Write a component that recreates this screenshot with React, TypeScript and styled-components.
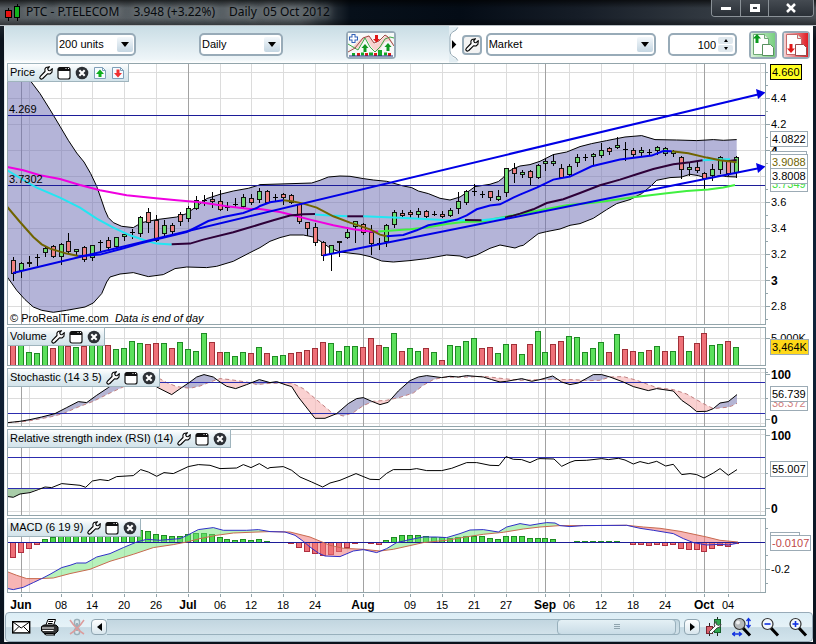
import React from "react";
import styled, { createGlobalStyle, css } from "styled-components";

const GlobalStyle = createGlobalStyle`
  *, *::before, *::after { box-sizing: border-box; }
  body { margin: 0; background: #0a121c; }
  button, select, input { font: inherit; color: inherit; margin: 0; }
`;

/* ---------- chart data ---------- */

type Pt = [number, number];

/* Samples are stored as x, y pairs at three units per pixel from an origin. */
const trace = (ox: number, oy: number, v: number[]): Pt[] => {
  const out: Pt[] = [];
  for (let i = 0; i < v.length; i += 2) out.push([ox + v[i] / 3, oy + v[i + 1] / 3]);
  return out;
};

const LEFT = 7;
const WIDTH = 759;
const STEP = 7.95;
const barX = (i: number) => Math.floor(13.3 + i * STEP);

const path = (p: Pt[]) =>
  "M" + p.map(([x, y]) => `${x.toFixed(1)} ${(y + 0.3).toFixed(1)}`).join("L");

const yAt = (p: Pt[], x: number) => {
  if (x <= p[0][0]) return p[0][1];
  for (let i = 1; i < p.length; i++) {
    if (x <= p[i][0]) {
      const t = (x - p[i - 1][0]) / (p[i][0] - p[i - 1][0] || 1);
      return p[i - 1][1] + t * (p[i][1] - p[i - 1][1]);
    }
  }
  return p[p.length - 1][1];
};

/* Area between two series, split by which one is on top. */
const between = (a: Pt[], b: Pt[]) => {
  const end = Math.min(a[a.length - 1][0], b[b.length - 1][0]);
  const over: Pt[] = [];
  const under: Pt[] = [];
  const base: Pt[] = [];
  for (let x = a[0][0]; x <= end; x += 1) {
    const ya = yAt(a, x);
    const yb = yAt(b, x);
    over.push([x, Math.min(ya, yb)]);
    under.push([x, Math.max(ya, yb)]);
    base.unshift([x, yb]);
  }
  return { over: path([...over, ...base]) + "Z", under: path([...under, ...base]) + "Z" };
};

const minorX = [29, 61, 92, 124, 156, 220, 251, 283, 315, 347, 379, 410, 442, 474, 506, 538, 569, 601, 633, 665, 696, 728, 760];
const majorX = [21, 188, 363, 545, 704];

type Kind = "g" | "r" | "k";
type Candle = [Kind, number, number, number, number];

const candlesA: Candle[] = [
  ["r", 533, 541, 580, 602], ["g", 547, 550, 571, 593], ["k", 528, 546, 549, 560], ["k", 524, 533, 533, 556],
  ["g", 500, 505, 518, 530], ["r", 495, 500, 530, 533], ["g", 491, 493, 530, 553], ["r", 460, 484, 515, 518],
  ["g", 508, 508, 515, 526], ["r", 500, 502, 538, 544], ["g", 495, 496, 532, 540], ["k", 480, 487, 487, 512],
  ["r", 472, 481, 502, 508], ["g", 472, 473, 500, 503], ["g", 463, 463, 470, 482], ["k", 447, 457, 457, 476],
  ["g", 410, 412, 461, 468], ["r", 386, 397, 426, 457], ["r", 405, 421, 481, 483], ["g", 422, 436, 461, 468],
  ["r", 430, 436, 454, 464], ["r", 398, 404, 425, 436], ["g", 379, 386, 416, 424], ["g", 350, 360, 386, 388],
  ["k", 346, 360, 362, 376], ["r", 336, 358, 364, 382], ["r", 331, 364, 389, 391], ["k", 368, 382, 382, 392],
  ["k", 356, 373, 373, 380], ["g", 344, 352, 380, 384], ["r", 343, 356, 368, 372], ["g", 325, 334, 359, 366],
  ["r", 331, 334, 367, 370], ["k", 342, 351, 351, 360], ["r", 340, 344, 353, 374], ["r", 343, 346, 367, 370],
  ["r", 370, 373, 425, 431], ["r", 426, 428, 445, 466], ["r", 430, 443, 488, 497], ["r", 483, 488, 527, 542],
  ["g", 495, 497, 519, 570], ["k", 485, 485, 487, 530], ["g", 443, 457, 473, 476], ["g", 423, 425, 440, 486],
  ["r", 430, 432, 457, 464], ["r", 436, 456, 489, 522], ["k", 476, 491, 491, 508], ["g", 432, 437, 485, 500],
  ["g", 390, 398, 434, 443], ["r", 392, 400, 407, 411], ["r", 392, 398, 404, 411], ["g", 386, 394, 402, 413],
  ["r", 390, 394, 408, 411], ["k", 393, 402, 402, 406], ["r", 395, 402, 408, 411], ["g", 386, 391, 406, 410],
  ["g", 337, 364, 385, 400], ["g", 332, 335, 368, 374], ["k", 314, 334, 334, 347], ["k", 335, 342, 342, 352],
  ["r", 333, 335, 353, 361], ["g", 332, 349, 359, 362], ["g", 264, 265, 338, 348], ["r", 250, 266, 281, 306],
  ["g", 271, 278, 284, 292],
];
const candlesB: Candle[] = [
  ["r", 332, 334, 353, 372], ["g", 312, 316, 353, 355], ["g", 298, 305, 311, 330], ["g", 282, 305, 311, 315],
  ["r", 312, 325, 352, 354], ["g", 314, 318, 343, 349], ["g", 282, 292, 308, 318], ["k", 282, 291, 291, 302],
  ["g", 281, 284, 290, 312], ["g", 250, 271, 287, 291], ["r", 263, 266, 275, 284], ["g", 232, 256, 262, 264],
  ["k", 246, 269, 269, 302], ["r", 266, 271, 284, 292], ["g", 261, 271, 278, 288], ["k", 268, 276, 276, 285],
  ["g", 260, 262, 271, 284], ["g", 262, 266, 281, 286], ["g", 272, 275, 281, 288], ["r", 290, 292, 329, 356],
  ["g", 306, 321, 329, 345], ["r", 308, 322, 332, 336], ["r", 338, 340, 354, 388], ["g", 312, 328, 347, 362],
  ["g", 290, 293, 328, 340], ["r", 298, 301, 340, 345], ["g", 290, 292, 337, 352],
];
const place = (list: Candle[], oy: number) =>
  list.map(([k, ...v]) => ({ kind: k, y: v.map((n) => Math.floor(oy + n / 3)) }));
const candles = [...place(candlesA, 80), ...place(candlesB, 60)];

const upperBand: Pt[] = [
  ...trace(0, 80, [22, -45, 50, -40, 70, -22, 90, 0, 120, 40, 150, 88, 180, 138, 205, 180, 230, 218, 252, 245, 272, 280, 290, 318, 303, 355, 315, 390, 325, 412, 340, 427, 365, 438, 400, 442, 425, 427, 470, 418, 530, 410, 560, 400, 590, 378, 620, 355, 660, 342, 700, 332, 745, 324, 775, 315]),
  ...trace(260, 80, [0, 313, 60, 311, 155, 308, 180, 300, 205, 290, 240, 287, 270, 288, 310, 295, 340, 299, 380, 303, 405, 310, 430, 317, 455, 322, 475, 332, 505, 340, 540, 354, 570, 359, 600, 350, 630, 330, 645, 319, 690, 312, 715, 304, 730, 292, 742, 275, 765, 263]),
  ...trace(520, 60, [0, 317, 30, 313, 60, 303, 100, 283, 140, 275, 180, 259, 215, 250, 260, 241, 315, 230, 365, 226, 405, 238, 470, 239, 530, 241, 580, 238, 610, 240, 650, 238]),
];
const lowerBand: Pt[] = [
  ...trace(0, 80, [22, 590, 50, 630, 75, 658, 100, 680, 125, 690, 160, 696, 200, 690, 255, 680, 280, 668, 305, 640, 320, 605, 330, 590, 360, 581, 400, 577, 445, 589, 490, 583, 525, 565, 560, 560, 620, 562, 650, 558, 700, 543, 750, 517]),
  ...trace(260, 80, [0, 502, 30, 483, 60, 472, 90, 464, 130, 464, 160, 470, 185, 485, 210, 503, 240, 515, 300, 522, 330, 529, 365, 542, 400, 545, 450, 541, 500, 535, 560, 524, 600, 527, 620, 533, 650, 524, 690, 504, 720, 494, 765, 503]),
  ...trace(520, 60, [0, 557, 10, 555, 55, 520, 80, 514, 120, 506, 150, 495, 180, 490, 220, 474, 260, 448, 290, 430, 330, 418, 365, 400, 395, 375, 410, 360, 450, 352, 485, 350, 510, 342, 535, 346, 560, 354, 580, 352, 600, 345, 620, 349, 650, 350]),
];

const MAGENTA = "#f000e0";
const CYAN = "#22e6f2";
const PLUM = "#2e0038";
const OLIVE = "#706400";
const GREEN = "#40f040";
const BLUE = "#0000ee";

const averages: { color: string; points: Pt[] }[] = [
  { color: MAGENTA, points: [...trace(0, 80, [22, 260, 70, 270, 120, 285, 180, 296, 240, 314, 300, 330, 380, 345, 460, 353, 530, 360, 600, 366, 680, 378, 750, 386]), ...trace(260, 80, [0, 386, 60, 395, 100, 405, 150, 418, 220, 435, 280, 447, 330, 454, 355, 454])] },
  { color: GREEN, points: [...trace(260, 80, [355, 454, 450, 447, 500, 442, 560, 431, 610, 425, 670, 424, 700, 416, 760, 405]), ...trace(520, 60, [0, 462, 60, 450, 140, 435, 240, 425, 340, 411, 440, 399, 500, 392, 565, 388, 610, 382, 645, 374])] },
  { color: CYAN, points: trace(0, 80, [22, 270, 80, 305, 110, 322, 180, 352, 240, 382, 290, 415, 340, 442, 390, 465, 440, 482, 470, 490, 515, 493]) },
  { color: PLUM, points: [...trace(0, 80, [515, 492, 570, 490, 610, 478, 700, 456, 740, 444]), ...trace(260, 80, [0, 432, 40, 420, 90, 406, 130, 402, 165, 401])] },
  { color: CYAN, points: trace(260, 80, [165, 403, 210, 406, 262, 408]) },
  { color: PLUM, points: trace(260, 80, [262, 408, 310, 408]) },
  { color: CYAN, points: trace(260, 80, [310, 408, 400, 412, 450, 414, 550, 419, 615, 420]) },
  { color: PLUM, points: trace(260, 80, [615, 419, 665, 420]) },
  { color: CYAN, points: trace(260, 80, [665, 420, 700, 416, 735, 412]) },
  { color: PLUM, points: [...trace(260, 80, [735, 412, 760, 406]), ...trace(520, 60, [0, 460, 40, 447, 80, 428, 130, 417, 180, 398, 240, 375, 300, 358, 350, 342, 400, 326, 460, 312, 510, 306, 548, 300])] },
  { color: CYAN, points: trace(520, 60, [548, 300, 590, 298, 630, 297]) },
  { color: PLUM, points: trace(520, 60, [628, 302, 650, 299]) },
  { color: OLIVE, points: trace(0, 80, [22, 380, 60, 425, 100, 470, 125, 492, 150, 505, 200, 520, 235, 527]) },
  { color: OLIVE, points: trace(260, 80, [70, 360, 100, 364, 130, 370, 170, 382, 220, 408, 270, 427, 330, 447, 360, 463, 380, 468]) },
  { color: OLIVE, points: trace(520, 60, [455, 273, 505, 279, 560, 292, 600, 300, 650, 306]) },
  { color: BLUE, points: [...trace(0, 80, [235, 528, 300, 523, 360, 507, 420, 490, 470, 477, 560, 455, 590, 440, 625, 422, 670, 410, 730, 398, 770, 383]), ...trace(260, 80, [0, 377, 30, 366, 70, 360])] },
  { color: BLUE, points: [...trace(260, 80, [380, 468, 430, 464, 470, 450, 505, 435, 550, 427, 590, 418, 620, 405, 650, 387, 690, 376, 720, 372, 760, 352]), ...trace(520, 60, [0, 403, 50, 382, 100, 358, 150, 349, 215, 318, 300, 298, 360, 290, 395, 286, 430, 272, 455, 273])] },
];

const volumeKinds =
  "rgggg" + "rgrgr" + "ggrgg" + "ggrrg" + "rgggg" + "rrggg" + "rgrgg" + "rrrrr" + "ggggr" + "rrggr" + "ggrgr" + "ggggr" + "rggrg" + "rggrr" + "ggggg" + "rgrrg" + "rgrgr" + "grrgg" + "rg";
const volumeTops = [
  55, 50, 83, 86, 50, 70, 55, 64, 68, 64, 50, 50, 62, 74, 71, 49, 55, 58, 56, 56, 70, 52, 73, 80, 25, 52, 83, 83, 95, 83, 86, 67, 86,
  95, 92, 86, 82, 77, 70, 52, 55, 80, 64, 64, 67, 40, 61, 67, 25, 80, 70, 80, 70, 83, 107, 61, 64, 49, 40, 70, 67, 86, 58, 58, 89, 58, 19,
  83, 58, 49, 34, 37, 83, 70, 52, 83, 28, 73, 80, 83, 76, 64, 80, 80, 34, 80, 55, 25, 61, 58, 49, 67,
];

const stochMain: Pt[] = [
  ...trace(0, 325, [24, 292, 60, 288, 90, 283, 125, 275, 165, 265, 200, 247, 235, 229, 260, 232, 290, 210, 325, 187, 360, 160, 440, 155, 470, 185, 515, 208, 545, 187, 570, 170, 590, 155, 612, 148, 640, 155, 660, 170, 680, 183, 707, 190, 740, 178, 778, 163]),
  ...trace(270, 325, [0, 172, 20, 169, 45, 178, 65, 184, 85, 215, 135, 279, 165, 279, 200, 265, 235, 235, 260, 220, 280, 217, 305, 228, 330, 238, 355, 231, 385, 197, 420, 166, 445, 155, 470, 151, 515, 157, 540, 153, 565, 155, 590, 151, 640, 155, 665, 163, 690, 170, 710, 168, 755, 160, 785, 168]),
  ...trace(540, 325, [0, 163, 38, 152, 65, 170, 90, 178, 115, 173, 160, 148, 185, 148, 210, 155, 250, 170, 280, 184, 325, 196, 350, 190, 400, 197, 425, 225, 450, 242, 470, 259, 500, 258, 520, 250, 540, 233, 565, 229, 591, 208]),
];
const stochSignal: Pt[] = [
  ...trace(0, 325, [24, 292, 80, 288, 150, 275, 190, 265, 230, 247, 280, 228, 330, 203, 380, 180, 430, 150, 470, 155, 500, 172, 530, 184, 570, 189, 600, 182, 630, 170, 660, 160, 690, 163, 750, 172, 770, 178]),
  ...trace(270, 325, [0, 174, 65, 173, 100, 190, 150, 232, 185, 262, 220, 272, 250, 262, 280, 241, 310, 228, 350, 225, 390, 216, 430, 203, 460, 180, 490, 163, 520, 156, 600, 155, 640, 153, 700, 160, 750, 165]),
  ...trace(540, 325, [0, 163, 38, 163, 100, 163, 150, 166, 180, 165, 210, 155, 250, 154, 290, 165, 350, 187, 400, 193, 440, 206, 490, 235, 520, 250, 560, 246, 575, 242, 591, 234]),
];
const rsiLine: Pt[] = [
  ...trace(0, 325, [24, 514, 40, 516, 60, 506, 90, 502, 115, 493, 135, 485, 155, 487, 185, 475, 240, 480, 257, 486, 277, 467, 300, 463, 325, 466, 350, 454, 400, 451, 422, 433, 445, 440, 470, 453, 492, 442, 520, 445, 565, 424, 595, 418, 630, 420, 660, 430, 710, 428, 730, 418, 753, 427, 778, 415, 803, 430]),
  ...trace(270, 325, [0, 427, 40, 424, 65, 435, 90, 455, 125, 470, 158, 485, 180, 473, 210, 465, 258, 445, 300, 462, 328, 463, 350, 444, 370, 433, 420, 433, 440, 430, 470, 436, 515, 436, 545, 429, 590, 412, 620, 412, 660, 420, 687, 421, 708, 394, 730, 402, 755, 403, 780, 412, 803, 401]),
  ...trace(540, 325, [0, 400, 42, 401, 65, 423, 90, 411, 105, 406, 140, 405, 185, 400, 205, 403, 235, 399, 255, 404, 280, 416, 300, 409, 325, 415, 350, 408, 377, 422, 400, 417, 425, 448, 450, 445, 470, 448, 492, 458, 520, 443, 540, 430, 565, 450, 591, 433]),
];
const macdLine: Pt[] = [
  ...trace(0, 510, [24, 235, 40, 238, 70, 231, 100, 217, 125, 205, 150, 192, 185, 172, 210, 165, 230, 158, 258, 158, 290, 140, 330, 130, 370, 112, 410, 95, 440, 87, 480, 90, 540, 85, 560, 76, 595, 58, 640, 52, 670, 60, 740, 60, 775, 58]),
  ...trace(270, 510, [0, 64, 45, 65, 75, 75, 100, 93, 120, 110, 145, 128, 165, 137, 210, 139, 250, 122, 280, 118, 320, 127, 350, 115, 380, 97, 420, 88, 460, 80, 500, 80, 530, 82, 570, 70, 600, 59, 640, 58, 685, 65, 710, 50, 750, 40, 780, 45]),
  ...trace(540, 510, [0, 40, 20, 37, 45, 38, 60, 46, 90, 49, 130, 46, 260, 45, 300, 54, 340, 60, 400, 70, 430, 85, 460, 97, 500, 104, 540, 102, 565, 104, 591, 99]),
];
const macdSignal: Pt[] = [
  ...trace(0, 510, [24, 185, 50, 195, 80, 205, 120, 205, 160, 203, 210, 190, 270, 177, 330, 153, 400, 132, 460, 112, 520, 103, 560, 95, 600, 85, 650, 75, 700, 68, 750, 66]),
  ...trace(270, 510, [0, 64, 60, 65, 120, 80, 180, 105, 220, 114, 280, 117, 330, 122, 370, 117, 420, 106, 460, 97, 530, 90, 600, 78, 640, 72, 700, 66, 760, 56]),
  ...trace(540, 510, [0, 50, 60, 46, 130, 46, 260, 45, 310, 50, 360, 54, 420, 63, 500, 80, 540, 90, 594, 95]),
];
const macdBars = [
  142, 127, 115, 103, 88, 80, 75, 72, 68, 66, 64, 62, 62, 62, 62, 62, 61, 64, 73, 76, 79, 79, 73, 69, 70, 73, 82, 88, 91, 88, 91, 88, 94,
  97, 97, 100, 112, 122, 130, 136, 133, 124, 112, 100, 97, 100, 103, 91, 82, 76, 76, 76, 79, 82, 82, 85, 82, 79, 79, 79, 85, 88, 79, 79, 79, 85, 85,
  85, 88, 97, 97, 94, 94, 94, 94, 94, 94, 97, 103, 103, 106, 103, 106, 103, 115, 118, 118, 122, 115, 106, 108, 100,
];

const stochArea = between(stochMain, stochSignal);
const macdArea = between(macdLine, macdSignal);

const dates = [
  { x: 21, label: "Jun", major: true }, { x: 61, label: "08" }, { x: 92, label: "14" }, { x: 124, label: "20" },
  { x: 156, label: "26" }, { x: 188, label: "Jul", major: true }, { x: 220, label: "06" }, { x: 251, label: "12" },
  { x: 283, label: "18" }, { x: 315, label: "24" }, { x: 363, label: "Aug", major: true }, { x: 410, label: "09" },
  { x: 442, label: "15" }, { x: 474, label: "21" }, { x: 506, label: "27" }, { x: 545, label: "Sep", major: true },
  { x: 569, label: "06" }, { x: 601, label: "12" }, { x: 633, label: "18" }, { x: 665, label: "24" },
  { x: 704, label: "Oct", major: true }, { x: 728, label: "04" },
];

/* ---------- window ---------- */

const Window = styled.main`
  display: flex;
  flex-direction: column;
  min-height: 100vh;
  padding: 0 2px 2px 4px;
  background: linear-gradient(#3c4249, #0a121c 40px, #10243c 300px, #0a121c);
  font-family: "Liberation Sans", Arial, sans-serif;
  font-size: 11px;
  color: #000;
`;

const TitleBar = styled.header`
  display: flex;
  align-items: center;
  height: 26px;
  margin: 0 -2px 0 -4px;
  padding-left: 4px;
  background: linear-gradient(#000a, #0000 8px, #0000 18px, #0006), linear-gradient(90deg, #565c61 0, #5a6065 300px, #07101a 350px, #040c16 460px, #161d27 580px, #30373f 700px, #464c52 100%);
  border-bottom: 1px solid #b8bfc4;
`;

const TitleText = styled.h1`
  display: flex;
  gap: 14px;
  flex: 1;
  margin: 0 0 2px 4px;
  font: 400 12px/18px "Noto Sans", "Open Sans", sans-serif;
  color: #06090c;
  white-space: pre;
`;

const TitleGlow = styled.span`
  text-shadow: 0 0 6px #8a9094, 0 0 10px #7a8084;
`;

const WindowButtons = styled.div`
  display: flex;
  align-self: flex-start;
  margin-right: 2px;
  border: 1px solid #8b9298;
  border-top: 0;
  border-radius: 0 0 4px 4px;
  overflow: hidden;
`;

const WindowButton = styled.button<{ $wide?: boolean }>`
  display: grid;
  place-items: center;
  width: ${(p) => (p.$wide ? 45 : 28)}px;
  height: 16px;
  padding: 0;
  border: 0;
  background: linear-gradient(#454b52, #2a3037);
  & + & { border-left: 1px solid #8b9298; }
`;

const Content = styled.div`
  display: flex;
  flex-direction: column;
  flex: 1;
  background: #fff;
  border: 1px solid #dfe7ea;
  border-width: 0 0 0 1px;
  margin-right: 1px;
`;

/* ---------- toolbar ---------- */

const Toolbar = styled.div`
  display: flex;
  height: 37px;
`;

const MainTools = styled.div`
  display: flex;
  flex: 1;
  align-items: center;
  gap: 63px;
  padding-left: 51px;
  background: linear-gradient(#c9dde5, #eef5f8 90%, #fff);
`;

const OrderTools = styled.div`
  display: flex;
  align-items: center;
  flex: none;
  width: 364px;
  padding-right: 3px;
  background: #fff;
`;

const OrderType = styled.div`
  display: flex;
  align-items: center;
  gap: 4px;
`;

const fieldBox = css`
  height: 23px;
  border: 2px solid #98abb8;
  border-radius: 5px;
  background: #fff;
`;

const SelectBox = styled.label<{ $width: number }>`
  display: grid;
  align-items: center;
  width: ${(p) => p.$width}px;
  ${fieldBox}
  & > * { grid-area: 1 / 1; }
`;

const Select = styled.select`
  appearance: none;
  width: 100%;
  height: 19px;
  padding: 0 20px 0 1px;
  border: 0;
  background: transparent;
  line-height: 19px;
`;

const Arrow = styled.span`
  display: grid;
  place-items: center;
  justify-self: end;
  width: 16px;
  height: 15px;
  margin-right: 1px;
  border-radius: 2px;
  background: linear-gradient(#f4f8fb, #c4d6e2);
  pointer-events: none;
`;

const Quantity = styled.label`
  display: flex;
  align-items: center;
  width: 71px;
  margin: 0 12px;
  ${fieldBox}
`;

const QuantityInput = styled.input`
  flex: 1;
  min-width: 0;
  width: 0;
  height: 19px;
  padding: 0 2px;
  border: 0;
  background: transparent;
  text-align: right;
`;

const Spinner = styled.span`
  display: grid;
  gap: 1px;
  width: 17px;
`;

const SpinButton = styled.button`
  display: grid;
  place-items: center;
  width: 15px;
  height: 7px;
  padding: 0;
  border: 0;
  border-radius: 2px;
  background: #dfe8ee;
`;

const ToolButton = styled.button<{ $size: number; $wide?: number; $tint?: string }>`
  display: grid;
  place-items: center;
  flex: none;
  width: ${(p) => p.$wide ?? p.$size}px;
  height: ${(p) => p.$size}px;
  padding: 0;
  border: 2px solid #98abb8;
  border-radius: 4px;
  background: ${(p) => p.$tint ?? "#f3f3f3"};
`;

const ActionPair = styled.div`
  display: flex;
  gap: 5px;
`;

/* ---------- panels ---------- */

const Charts = styled.div`
  display: flex;
  flex-direction: column;
  gap: 2px;
  padding-left: 2px;
`;

const PanelRow = styled.section`
  display: flex;
`;

const PlotArea = styled.div`
  position: relative;
  flex: 1;
  min-width: 0;
`;

const Plot = styled.svg`
  display: block;
  width: 100%;
`;

const AxisArea = styled.div`
  position: relative;
  flex: none;
  width: 47px;
`;

const Axis = styled.svg`
  display: block;
  width: 47px;
  overflow: visible;
`;

const PanelLabel = styled.div`
  position: absolute;
  top: 0;
  left: 0;
  display: flex;
  align-items: center;
  height: 19px;
  padding: 0 1px 0 2px;
  border: 1px solid #9fb4bd;
  background: linear-gradient(#fff, #e6f0f4 40%, #d3e3ea);
`;

const PanelTitle = styled.h2`
  margin: 0 2px 0 0;
  font-size: 11px;
  line-height: 17px;
  font-weight: 400;
  white-space: nowrap;
`;

const IconButton = styled.button`
  display: grid;
  place-items: center;
  width: 18px;
  height: 17px;
  padding: 0;
  border: 0;
  background: none;
`;

const LineLabel = styled.span<{ $top: number }>`
  position: absolute;
  left: 2px;
  top: ${(p) => p.$top}px;
  line-height: 12px;
`;

const Credit = styled.p`
  position: absolute;
  left: 3px;
  bottom: 0;
  margin: 0;
  line-height: 13px;
  white-space: pre;
`;

const ValueTag = styled.span<{ $top: number; $color?: string; $fill?: string; $edge?: string }>`
  position: absolute;
  left: 4px;
  top: ${(p) => p.$top}px;
  height: 16px;
  padding: 0 1px;
  border: 1px solid ${(p) => p.$edge ?? "#9cabb5"};
  background: ${(p) => p.$fill ?? "#fff"};
  color: ${(p) => p.$color ?? "#000"};
  line-height: 14px;
  white-space: nowrap;
`;

const CoveredTag = styled(ValueTag)<{ $width: number }>`
  width: ${(p) => p.$width}px;
`;

const DateAxis = styled.svg`
  display: block;
  width: calc(100% - 49px);
  height: 19px;
  margin-left: 2px;
  overflow: visible;
`;

/* ---------- bottom bar ---------- */

const BottomBar = styled.footer`
  display: flex;
  align-items: center;
  height: 30px;
  padding: 0 0 0 1px;
  border: 1px solid #98abb8;
  border-radius: 4px;
  background: linear-gradient(#dceef6, #e6f2f7 50%, #c6dae4 52%, #d2e4ec);
`;

const BarButton = styled.button`
  display: grid;
  place-items: center;
  flex: none;
  width: 28px;
  height: 24px;
  padding: 0;
  border: 0;
  background: none;
`;

const ScrollTrack = styled.div`
  display: flex;
  flex: 1;
  height: 16px;
  margin: 0 4px 0 0;
  border: 1px solid #98b0bc;
  border-left: 0;
  border-radius: 0 4px 4px 0;
  background: linear-gradient(#c2d6e0, #d2e2ea);
`;

const ScrollSpace = styled.span<{ $grow: number }>`
  flex: ${(p) => p.$grow} 1 0;
`;

const ScrollThumb = styled.button`
  display: grid;
  place-items: center;
  flex: 118 1 0;
  height: 16px;
  margin-top: -1px;
  padding: 0;
  border: 1px solid #98b0bc;
  border-radius: 4px;
  background: linear-gradient(#e4f0f5, #c9dce6);
`;

const ScrollArrow = styled.button`
  display: grid;
  place-items: center;
  flex: none;
  width: 16px;
  height: 16px;
  padding: 0;
  border: 1px solid #8fa5b1;
  border-radius: 4px;
  background: linear-gradient(#fff, #d8e6ed);
`;

/* ---------- icons ---------- */

const Wrench = () => (
  <svg width="14" height="14" viewBox="0 0 14 14">
    <path d="M7 1.500 10.500.700 8.600 2.800 9.500 4.500l1.600.2 2.200-2-.4 3.600-2 1.700-2.400-.1L3.800 12.500l-1.600.8-1.500-1.400.6-1.500L6 5.500 5.900 3z" fill="#fafafa" stroke="#000" strokeWidth="1.100" strokeLinejoin="round" />
  </svg>
);
const MaxIcon = () => (
  <svg width="14" height="14" viewBox="0 0 14 14">
    <rect x="1" y="1.500" width="12" height="11.500" rx="2" fill="#fff" stroke="#111" strokeWidth="1.200" />
    <path d="M1 5V3q0-1.500 1.500-1.500h9Q13 1.500 13 3v2z" fill="#111" />
    <path d="M8.500 2.500h1M11 2.500h1" stroke="#fff" />
  </svg>
);
const CloseIcon = () => (
  <svg width="14" height="14" viewBox="0 0 14 14">
    <circle cx="7" cy="7" r="6.300" fill="#2c3035" />
    <path d="M4.300 4.300l5.400 5.400M9.700 4.300 4.300 9.700" stroke="#fff" strokeWidth="2.100" />
  </svg>
);
const SheetArrow = ({ up }: { up?: boolean }) => (
  <svg width="14" height="14" viewBox="0 0 14 14">
    <path d="M1.500 1.500h8l3 3v8h-11z" fill="#f6fbff" stroke="#7f9fb8" />
    <path d="M9.500 1.500v3h3" fill="none" stroke="#7f9fb8" />
    {up ? (
      <path d="M7 3.500 11 8H8.500v3h-3V8H3z" fill="#0fae1c" />
    ) : (
      <path d="M7 11.500 11 7H8.500V3.500h-3V7H3z" fill="#f03030" />
    )}
  </svg>
);
const Down = () => (
  <svg width="8" height="5" viewBox="0 0 8 5"><path d="M0 0h8L4 5z" /></svg>
);
const AppIcon = () => (
  <svg width="18" height="18" viewBox="0 0 18 18">
    <path d="M4.500 4v13M13.500 0v17" stroke="#000" />
    <rect x="1.500" y="6.500" width="6" height="7" fill="#e81010" stroke="#000" />
    <rect x="10.500" y="2.500" width="5" height="11" fill="#12b41c" stroke="#000" />
  </svg>
);
const IndicatorIcon = () => (
  <svg width="46" height="24" viewBox="0 0 46 24">
    <rect width="46" height="24" fill="#f7f9f8" />
    <path d="M0 18 15 4 21 2l6 9 4-2L38 2l4 3 4 7-5-4-4 1-7 10-5-3-8-12-7 12-4-2z" fill="#f6c8c4" opacity=".8" />
    <path d="M0 11 10 17 17 5l5 9 5 5 5-5 5-8 5-2 4 1" fill="none" stroke="#39a845" />
    <path d="M0 19 7 15 15 5 21 3l5 7 5-2 6-6 3 2 6 9" fill="none" stroke="#9c4a44" />
    <path d="M5.500 1v9M1 5.500h9" stroke="#3060b8" strokeWidth="4" />
    <path d="M5.500 2v7M2 5.500h7" stroke="#fff" strokeWidth="2" />
    <path d="M17 11l3.500 4h-2v4h-3v-4h-2zM40 10l3.500 4h-2v4h-3v-4h-2z" fill="#109820" />
    <path d="M28.500 9.500 32 6h-2V2h-3v4h-2z" fill="#e01818" />
    <path d="M9 21.500h3M17 21.500h3M26 21.500h3M40 21.500h3" stroke="#e01818" strokeWidth="3" />
    <path d="M4 21.500h3M13 21h3M21 21h4M36 21h3" stroke="#12a828" strokeWidth="3" />
    <path d="M30 17h4v6h-4z" fill="#12a828" />
    <path d="M1 23h44" stroke="#1b2a80" />
  </svg>
);
const OrderIcon = ({ buy }: { buy?: boolean }) => (
  <svg width="24" height="24" viewBox="0 0 24 24">
    <defs>
      <linearGradient id={buy ? "buy" : "sell"} x1="0" x2="1">
        <stop offset="0" stopColor={buy ? "#d8f2d8" : "#f7d4d4"} />
        <stop offset="1" stopColor={buy ? "#78cf80" : "#e01c24"} />
      </linearGradient>
    </defs>
    <rect width="24" height="24" fill={`url(#${buy ? "buy" : "sell"})`} />
    <path d="M2.500 1.500h11l4 4v16h-15z" fill="#fff" stroke={buy ? "#6da875" : "#c46a6a"} />
    <path d="M13.500 1.500v4h4" fill="#e4eee4" stroke={buy ? "#6da875" : "#c46a6a"} />
    <path d="M11.500 11.500h8l3 3v8h-11z" fill="#fff" stroke={buy ? "#58905f" : "#9a4a4a"} />
    {buy ? (
      <path d="M6 1l4 4.500H7.500V10h-3V5.500H2z" fill="#0a9a1c" />
    ) : (
      <path d="M7 20l4-4.500H8.500V11h-3v4.500H3z" fill="#e01818" />
    )}
  </svg>
);
const Bulge = () => (
  <svg width="13" height="37" viewBox="0 0 13 37">
    <path d="M9 0 8 3Q1 5 1 10v17q0 4 7 7l1 3H0V0z" fill="#e2edf2" />
    <path d="M9 1Q8 4 4 5.500 1 7 1 11v14q0 4 3 5.500 4 1.500 5 4.500" fill="none" stroke="#8fa5b1" />
    <path d="M3 14l4.500 4.500L3 23z" />
  </svg>
);
const Mail = () => (
  <svg width="19" height="13" viewBox="0 0 19 13">
    <rect x=".7" y=".7" width="17" height="11.200" fill="#fff" stroke="#000" strokeWidth="1.400" />
    <path d="M1 1l8.200 6L17.500 1M1 11.500l6-6M17.500 11.500l-6-6" fill="none" stroke="#000" />
  </svg>
);
const Printer = () => (
  <svg width="19" height="18" viewBox="0 0 19 18">
    <path d="M5.500 8 8 1.500h7.500L13.500 8z" fill="#fff" stroke="#000" />
    <path d="M8.500 3.500h4.500M8 5.500h4.500" stroke="#000" />
    <path d="M1.500 8.500 4 7h12l2 2v4l-2.500 2.500h-11L1.500 13z" fill="#333" stroke="#000" />
    <path d="M2 10h12M2.500 12.500h11" stroke="#fff" strokeWidth="1" />
    <path d="M4 15.500h9l2 1.500H6z" fill="#fff" stroke="#000" />
  </svg>
);
const Unlink = () => (
  <svg width="18" height="18" viewBox="0 0 18 18">
    <rect x="6.500" y="1.500" width="5" height="6" rx="2" fill="#d8e8ee" stroke="#9ab0ba" strokeWidth="1.500" />
    <rect x="6.500" y="10.500" width="5" height="6" rx="2" fill="#d8e8ee" stroke="#9ab0ba" strokeWidth="1.500" />
    <path d="M9 5v8" stroke="#9ab0ba" strokeWidth="2" />
    <path d="M2 2q6 9 14 14M16 2Q10 11 2 16" fill="none" stroke="#dc9c9c" strokeWidth="1.500" />
  </svg>
);
const StyleIcon = () => (
  <svg width="18" height="20" viewBox="0 0 18 20">
    <path d="M4.500 6v13M12.500 0v19" stroke="#222" />
    <rect x="1.500" y="9.500" width="6" height="7" fill="#d8606c" stroke="#7c2430" />
    <rect x="9.500" y="2.500" width="6" height="13" fill="#30a850" stroke="#14602a" />
    <path d="M11 4.500 9 7l1 2-6 6 2 2 6-6 3-1 1-3-2.500 1.500L11 7z" fill="#fff" stroke="#444" />
  </svg>
);
const Magnifier = ({ kind }: { kind: "fit" | "out" | "in" }) => (
  <svg width="20" height="20" viewBox="0 0 20 20">
    <path d="M11 11l6 6.500" stroke="#000" strokeWidth="3" strokeLinecap="square" />
    <circle cx="7.500" cy="7" r="5.500" fill={kind === "fit" ? "#b4b8ba" : "#f3f8fc"} stroke="#333" strokeWidth="1.200" />
    {kind === "fit" && <path d="M16.500 2v8M14.500 4l2-2.500 2 2.500M14.500 8l2 2.500 2-2.500M1 17h8M3 15l-2.500 2L3 19M7 15l2.500 2L7 19" fill="none" stroke="#1030e0" strokeWidth="1.300" />}
    {kind === "fit" && <circle cx="6" cy="5.500" r="2" fill="#eee" />}
    {kind !== "fit" && <path d="M4.500 7h6" stroke="#1030e0" strokeWidth="1.600" />}
    {kind === "in" && <path d="M7.500 4v6" stroke="#1030e0" strokeWidth="1.600" />}
  </svg>
);

/* ---------- pieces ---------- */

const Grid = ({ top, height, rows }: { top: number; height: number; rows: number[] }) => (
  <g>
    <path d={minorX.map((x) => `M${x + 0.5} ${top}v${height}`).join("") + rows.map((y) => `M${LEFT} ${y + 0.5}h${WIDTH}`).join("")} stroke="#dcdcdc" />
    <path d={majorX.map((x) => `M${x + 0.5} ${top}v${height}`).join("")} stroke="#a2a2a2" />
  </g>
);

type Tick = { y: number; label?: string; bold?: boolean };

const Panel = ({ top, height, title, price, rows, ticks, tags, extras, children }: {
  top: number; height: number; title: string; price?: boolean; rows: number[]; ticks: Tick[];
  tags: React.ReactNode; extras?: React.ReactNode; children: React.ReactNode;
}) => (
  <PanelRow aria-label={title}>
    <PlotArea>
      <Plot height={height} viewBox={`${LEFT} ${top} ${WIDTH} ${height}`} preserveAspectRatio="none">
        <Grid top={top} height={height} rows={rows} />
        {children}
        <rect x={LEFT + 0.5} y={top + 0.5} width={WIDTH - 1} height={height - 1} fill="none" stroke="#93a5ab" />
      </Plot>
      <PanelLabel>
        <PanelTitle>{title}</PanelTitle>
        <IconButton aria-label={`${title} settings`}><Wrench /></IconButton>
        <IconButton aria-label={`Maximize ${title}`}><MaxIcon /></IconButton>
        <IconButton aria-label={`Close ${title}`}><CloseIcon /></IconButton>
        {price && <IconButton aria-label="Buy"><SheetArrow up /></IconButton>}
        {price && <IconButton aria-label="Sell"><SheetArrow /></IconButton>}
      </PanelLabel>
      {extras}
    </PlotArea>
    <AxisArea>
      <Axis height={height} viewBox={`0 ${top} 47 ${height}`}>
        <path d={ticks.map((t) => `M0 ${t.y + 0.5}h${t.label ? 4 : 2}`).join("")} stroke="#93a5ab" />
        {ticks.map((t) => t.label && (
          <text key={t.y} x="5" y={t.y + (t.bold ? 5 : 4)} fontSize={t.bold ? 12 : 11} fontWeight={t.bold ? 700 : 400}>{t.label}</text>
        ))}
      </Axis>
      {tags}
    </AxisArea>
  </PanelRow>
);

const fills: Record<Kind, string> = { g: "#6edc6e", r: "#f08080", k: "#000" };

const PriceChart = () => (
  <>
    <path d={path([...upperBand, ...[...lowerBand].reverse()]) + "Z"} fill="#6969b2" fillOpacity=".5" />
    <path d={path(upperBand)} fill="none" stroke="#000" />
    <path d={path(lowerBand)} fill="none" stroke="#000" />
    <path d="M7 115.500h758M7 185.500h758" stroke="#1c1c98" />
    {candles.map(({ kind, y: [high, open, close, low] }, i) => (
      <g key={i} shapeRendering="crispEdges">
        <path d={`M${barX(i) + 0.5} ${high}V${low + 1}`} stroke="#000" />
        <rect x={barX(i) - 1.5} y={open + 0.5} width="4" height={Math.max(close - open, 0)} fill={fills[kind]} stroke="#111" />
        {open === close && <path d={`M${barX(i) - 2} ${open + 0.5}h5`} stroke="#000" />}
      </g>
    ))}
    {averages.map((a, i) => <path key={i} d={path(a.points)} fill="none" stroke={a.color} strokeWidth="2" />)}
    <path d="M13 273 760 94M323 255.500 760 168" stroke="#0000e6" strokeWidth="2" />
    <path d="M765.500 92.500 756 89l2 10zM765.500 166.500 756 163l2 10z" fill="#0000e6" />
  </>
);

const App = () => (
  <>
    <GlobalStyle />
    <Window>
      <TitleBar>
        <AppIcon />
        <TitleText>
          <TitleGlow>PTC - P.TELECOM</TitleGlow>
          <TitleGlow>3.948 (+3.22%)</TitleGlow>
          <TitleGlow>{"Daily  05 Oct 2012"}</TitleGlow>
        </TitleText>
        <WindowButtons>
          <WindowButton aria-label="Minimize">
            <svg width="12" height="5" viewBox="0 0 12 5"><path d="M1 1h10v3H1z" fill="#fff" /></svg>
          </WindowButton>
          <WindowButton aria-label="Maximize">
            <svg width="12" height="10" viewBox="0 0 12 10"><path d="M1 1h10v8H1zM4 4v2h4V4z" fill="#fff" fillRule="evenodd" /></svg>
          </WindowButton>
          <WindowButton aria-label="Close" $wide>
            <svg width="12" height="10" viewBox="0 0 12 10"><path d="M2 1l8 8M10 1 2 9" stroke="#fff" strokeWidth="2.500" /></svg>
          </WindowButton>
        </WindowButtons>
      </TitleBar>
      <Content>
        <Toolbar>
          <MainTools>
            <SelectBox $width={80}>
              <Select aria-label="Units"><option>200 units</option></Select>
              <Arrow><Down /></Arrow>
            </SelectBox>
            <SelectBox $width={84}>
              <Select aria-label="Timeframe"><option>Daily</option></Select>
              <Arrow><Down /></Arrow>
            </SelectBox>
            <ToolButton $size={28} $wide={50} aria-label="Indicators"><IndicatorIcon /></ToolButton>
          </MainTools>
          <OrderTools>
            <Bulge />
            <OrderType>
              <ToolButton $size={20} aria-label="Order settings"><Wrench /></ToolButton>
              <SelectBox $width={170}>
                <Select aria-label="Order type"><option>Market</option></Select>
                <Arrow><Down /></Arrow>
              </SelectBox>
            </OrderType>
            <Quantity>
              <QuantityInput aria-label="Quantity" defaultValue="100" />
              <Spinner>
                <SpinButton aria-label="Increase"><svg width="4" height="3"><path d="M0 3h4L2 0z" /></svg></SpinButton>
                <SpinButton aria-label="Decrease"><svg width="4" height="3"><path d="M0 0h4L2 3z" /></svg></SpinButton>
              </Spinner>
            </Quantity>
            <ActionPair>
              <ToolButton $size={28} aria-label="Buy order"><OrderIcon buy /></ToolButton>
              <ToolButton $size={28} aria-label="Sell order"><OrderIcon /></ToolButton>
            </ActionPair>
          </OrderTools>
        </Toolbar>

        <Charts>
          <Panel
            top={63} height={262} title="Price" price
            rows={[72, 98, 124, 150, 176, 202, 228, 254, 280, 306]}
            ticks={[
              { y: 72 }, { y: 85 }, { y: 98, label: "4.4" }, { y: 111 }, { y: 124, label: "4.2" }, { y: 137 }, { y: 150, label: "4", bold: true },
              { y: 163 }, { y: 189 }, { y: 202, label: "3.6" }, { y: 215 }, { y: 228, label: "3.4" }, { y: 241 },
              { y: 254, label: "3.2" }, { y: 267 }, { y: 280, label: "3", bold: true }, { y: 293 }, { y: 306, label: "2.8" }, { y: 319 },
            ]}
            tags={
              <>
                <ValueTag $top={1} $fill="#ffff20" $edge="#000">4.660</ValueTag>
                <ValueTag $top={113} $color="#40e040">3.7349</ValueTag>
                <CoveredTag $top={88} $width={37} />
                <ValueTag $top={91} $color="#706400">3.9088</ValueTag>
                <ValueTag $top={68}>4.0822</ValueTag>
                <ValueTag $top={105}>3.8008</ValueTag>
              </>
            }
            extras={
              <>
                <LineLabel $top={40}>4.269</LineLabel>
                <LineLabel $top={110}>3.7302</LineLabel>
                <Credit>© ProRealTime.com  <em>Data is end of day</em></Credit>
              </>
            }
          >
            <PriceChart />
          </Panel>

          <Panel
            top={327} height={39} title="Volume" rows={[338]}
            ticks={[{ y: 338, label: "5,000K" }]}
            tags={<ValueTag $top={12} $fill="#ffd818">3,464K</ValueTag>}
          >
            {volumeTops.map((t, i) => {
              const y = Math.floor(325 + t / 3);
              const down = volumeKinds[i] === "r";
              return (
                <rect key={i} x={barX(i) - 2.5} y={y + 0.5} width="5" height={365 - y}
                  fill={down ? "#ee7078" : "#5ce05c"} stroke={down ? "#a03038" : "#1f8a24"} />
              );
            })}
          </Panel>

          <Panel
            top={368} height={59} title="Stochastic (14 3 5)" rows={[372, 398, 423]}
            ticks={[{ y: 372 }, { y: 374, label: "100", bold: true }, { y: 398 }, { y: 419, label: "0", bold: true }]}
            tags={
              <>
                <ValueTag $top={27} $color="#d08080">38.372</ValueTag>
                <ValueTag $top={18}>56.739</ValueTag>
              </>
            }
          >
            <path d={stochArea.over} fill="#7878b0" fillOpacity=".55" />
            <path d={stochArea.under} fill="#f8b8b8" fillOpacity=".65" />
            <path d={path(stochSignal)} fill="none" stroke="#c08080" strokeDasharray="4 3" />
            <path d="M7 382.500h758M7 413.500h758" stroke="#2c2cae" />
            <path d={path(stochMain)} fill="none" stroke="#000" />
          </Panel>

          <Panel
            top={429} height={87} title="Relative strength index (RSI) (14)" rows={[434, 473, 511]}
            ticks={[{ y: 435, label: "100", bold: true }, { y: 473 }, { y: 508, label: "0", bold: true }]}
            tags={<ValueTag $top={32}>55.007</ValueTag>}
          >
            <path d="M8 488h32l-10 4-10 2-6 3H8z" fill="#a8cca8" />
            <path d="M7 457.500h758M7 488.500h758" stroke="#2c2cae" />
            <path d={path(rsiLine)} fill="none" stroke="#000" />
          </Panel>

          <Panel
            top={518} height={75} title="MACD (6 19 9)" rows={[569]}
            ticks={[{ y: 528 }, { y: 555 }, { y: 569, label: "-0.2" }, { y: 583 }]}
            tags={
              <>
                <CoveredTag $top={14} $width={30} />
                <ValueTag $top={17} $color="#c04848">-0.0107</ValueTag>
              </>
            }
          >
            {macdBars.map((b, i) => {
              if (b === 97) return null;
              const end = Math.round(510 + b / 3);
              const up = b < 97;
              return (
                <rect key={i} x={barX(i) - 2.5} y={(up ? end : 542) + 0.5} width="5" height={Math.abs(542 - end)}
                  fill={up ? "#4cd84c" : "#ee7078"} stroke={up ? "#1f8a24" : "#b03040"} />
              );
            })}
            <path d={macdArea.over} fill="#70e478" fillOpacity=".5" />
            <path d={macdArea.under} fill="#f07878" fillOpacity=".55" />
            <path d="M7 542.500h758" stroke="#1c1c98" />
            <path d={path(macdSignal)} fill="none" stroke="#c86a50" />
            <path d={path(macdLine)} fill="none" stroke="#3030c8" />
          </Panel>
        </Charts>

        <DateAxis viewBox={`${LEFT} 593 ${WIDTH} 19`} preserveAspectRatio="none">
          {dates.map((d) => (
            <g key={d.x}>
              <path d={`M${d.x + 0.5} 594v3`} stroke="#93a5ab" />
              <text x={d.x} y="609" fontSize={d.major ? 12 : 11} fontWeight={d.major ? 700 : 400} textAnchor="middle">{d.label}</text>
            </g>
          ))}
        </DateAxis>

        <BottomBar>
          <BarButton aria-label="Send by mail"><Mail /></BarButton>
          <BarButton aria-label="Print"><Printer /></BarButton>
          <BarButton aria-label="Unlink"><Unlink /></BarButton>
          <ScrollArrow aria-label="Scroll left"><svg width="5" height="8"><path d="M5 0v8L0 4z" /></svg></ScrollArrow>
          <ScrollTrack>
            <ScrollSpace $grow={454} />
            <ScrollThumb aria-label="Visible range">
              <svg width="6" height="6"><path d="M0 .5h6M0 2.500h6M0 4.500h6" stroke="#90a4ae" /></svg>
            </ScrollThumb>
            <ScrollSpace $grow={3} />
          </ScrollTrack>
          <ScrollArrow aria-label="Scroll right"><svg width="5" height="8"><path d="M0 0v8l5-4z" /></svg></ScrollArrow>
          <BarButton aria-label="Chart style"><StyleIcon /></BarButton>
          <BarButton aria-label="Fit"><Magnifier kind="fit" /></BarButton>
          <BarButton aria-label="Zoom out"><Magnifier kind="out" /></BarButton>
          <BarButton aria-label="Zoom in"><Magnifier kind="in" /></BarButton>
        </BottomBar>
      </Content>
    </Window>
  </>
);

export default App;
